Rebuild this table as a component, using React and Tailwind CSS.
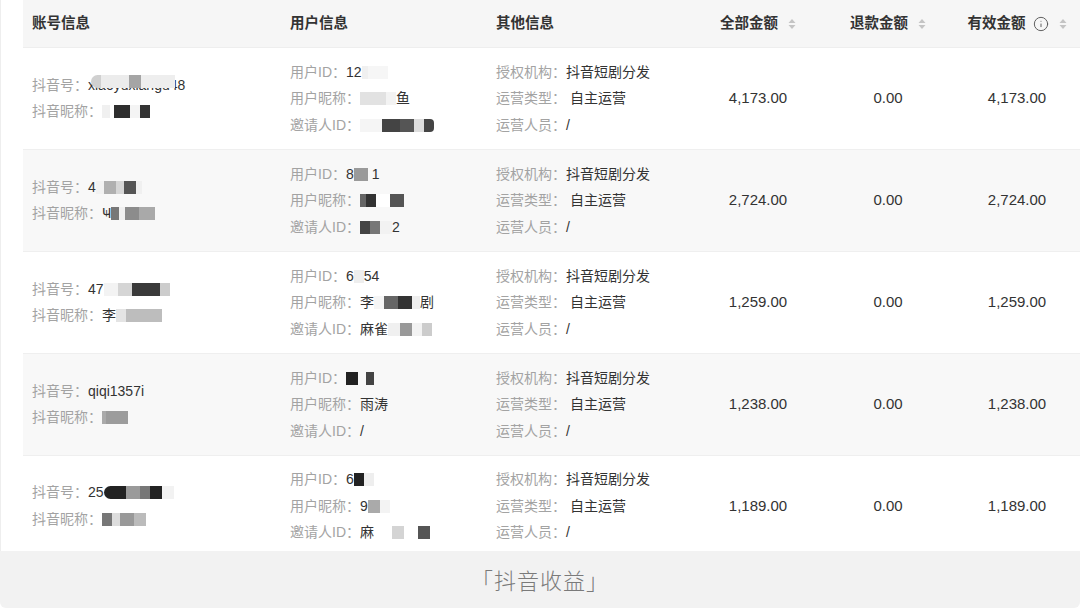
import React from 'react';
import { Info } from 'lucide-react';

const font = "font-['Liberation_Sans','Noto_Sans_CJK_SC',sans-serif]";

// mosaic blocks used to hide private values
const Mask = ({ blocks, over }) => (
    <span className={`inline-flex items-center align-middle h-[14px] blur-[0.6px] ${over ? '-ml-[94px] -mt-[8px]' : ''}`}>
        {blocks.map((cls, i) => (
            <span key={i} className={`inline-block h-[13px] ${cls}`} />
        ))}
    </span>
);

const SortIcon = () => (
    <svg width="8" height="12" viewBox="0 0 8 12" className="ml-[10px]">
        <polygon points="4,1 7.5,5 0.5,5" fill="#c4c4c4" />
        <polygon points="0.5,7 7.5,7 4,11" fill="#c4c4c4" />
    </svg>
);

const Line = ({ label, children }) => (
    <div className="flex items-center h-[26.5px] whitespace-nowrap">
        <span className="text-[#a3a3a3]">{label}</span>
        <span className="text-[#333] flex items-center">{children}</span>
    </div>
);

const rows = [
    {
        dyId: 'xiaoyuxiangu48',
        dyIdMask: ['w-[10px] bg-[#d0d0d0] rounded-l-full', 'w-[28px] bg-[#ececec]', 'w-[12px] bg-[#a5a5a5]', 'w-[34px] bg-[#eeeeee]'],
        dyIdMaskOver: true,
        dyName: null,
        dyNameMask: ['w-[8px] bg-[#f0f0f0]', 'w-[4px] bg-transparent', 'w-[16px] bg-[#2e2e2e]', 'w-[10px] bg-[#f4f4f4]', 'w-[10px] bg-[#333]'],
        uid: '12',
        uidMask: ['w-[6px] bg-[#f0f0f0]', 'w-[20px] bg-[#f6f6f6]'],
        uname: '',
        unameMask: ['w-[26px] bg-[#e2e2e2]', 'w-[10px] bg-[#f3f3f3]'],
        unameTail: '鱼',
        inviter: '',
        inviterMask: ['w-[22px] bg-[#f5f5f5]', 'w-[18px] bg-[#444]', 'w-[14px] bg-[#555]', 'w-[10px] bg-[#ddd]', 'w-[10px] bg-[#444] rounded-r-[4px]'],
        inviterTail: '',
        total: '4,173.00',
        bg: 'bg-white',
    },
    {
        dyId: '4',
        dyIdMask: ['w-[8px] bg-[#f2f2f2]', 'w-[12px] bg-[#b0b0b0]', 'w-[8px] bg-[#d6d6d6]', 'w-[12px] bg-[#555]', 'w-[6px] bg-[#f0f0f0]'],
        dyName: 'Ҹ',
        dyNameMask: ['w-[8px] bg-[#777]', 'w-[6px] bg-[#f0f0f0]', 'w-[14px] bg-[#8c8c8c]', 'w-[16px] bg-[#a9a9a9]'],
        uid: '8',
        uidMask: ['w-[14px] bg-[#9a9a9a]', 'w-[4px] bg-transparent'],
        uidTail: '1',
        uname: '',
        unameMask: ['w-[6px] bg-[#666]', 'w-[10px] bg-[#333]', 'w-[14px] bg-white', 'w-[14px] bg-[#555]'],
        unameTail: '',
        inviter: '',
        inviterMask: ['w-[10px] bg-[#444]', 'w-[10px] bg-[#777]', 'w-[12px] bg-[#f2f2f2]'],
        inviterTail: '2',
        total: '2,724.00',
        bg: 'bg-[#f8f8f8]',
    },
    {
        dyId: '47',
        dyIdMask: ['w-[14px] bg-[#f3f3f3]', 'w-[14px] bg-[#d5d5d5]', 'w-[28px] bg-[#3a3a3a]', 'w-[10px] bg-[#ccc]'],
        dyName: '李',
        dyNameMask: ['w-[10px] bg-[#e4e4e4]', 'w-[36px] bg-[#bdbdbd]'],
        uid: '6',
        uidMask: ['w-[10px] bg-[#eee]'],
        uidTail: '54',
        uname: '李',
        unameMask: ['w-[10px] bg-[#f5f5f5]', 'w-[14px] bg-[#666]', 'w-[14px] bg-[#333]', 'w-[8px] bg-[#eee]'],
        unameTail: '剧',
        inviter: '麻雀',
        inviterMask: ['w-[12px] bg-[#f0f0f0]', 'w-[12px] bg-[#999]', 'w-[10px] bg-[#f3f3f3]', 'w-[10px] bg-[#ccc]'],
        inviterTail: '',
        total: '1,259.00',
        bg: 'bg-white',
    },
    {
        dyId: 'qiqi1357i',
        dyIdMask: [],
        dyName: '',
        dyNameMask: ['w-[4px] bg-[#aaa]', 'w-[22px] bg-[#9c9c9c]'],
        uid: '',
        uidMask: ['w-[12px] bg-[#222]', 'w-[8px] bg-transparent', 'w-[8px] bg-[#444]'],
        uname: '雨涛',
        unameMask: [],
        unameTail: '',
        inviter: '/',
        inviterMask: [],
        inviterTail: '',
        total: '1,238.00',
        bg: 'bg-[#f8f8f8]',
    },
    {
        dyId: '25',
        dyIdMask: ['w-[22px] bg-[#222] rounded-l-full', 'w-[14px] bg-[#9a9a9a]', 'w-[10px] bg-[#777]', 'w-[12px] bg-[#222]', 'w-[12px] bg-[#f2f2f2]'],
        dyName: '',
        dyNameMask: ['w-[10px] bg-[#777]', 'w-[8px] bg-[#ddd]', 'w-[14px] bg-[#999]', 'w-[12px] bg-[#bbb]'],
        uid: '6',
        uidMask: ['w-[10px] bg-[#222]', 'w-[10px] bg-[#eee]'],
        uname: '9',
        unameMask: ['w-[12px] bg-[#aaa]', 'w-[10px] bg-[#f3f3f3]'],
        unameTail: '',
        inviter: '麻',
        inviterMask: ['w-[18px] bg-white', 'w-[12px] bg-[#d4d4d4]', 'w-[14px] bg-white', 'w-[12px] bg-[#555]'],
        inviterTail: '',
        total: '1,189.00',
        bg: 'bg-white',
    },
];

const Row = ({ r, last }) => (
    <div className={`grid grid-cols-[258px_206px_206px_130px_130px_128px] ${last ? 'h-[96px]' : 'h-[102px] border-b border-[#efefef]'} ${r.bg} text-[14px]`}>
        <div className={`pl-[9px] flex flex-col justify-center ${last ? 'pt-[4px]' : ''}`}>
            <Line label="抖音号：">
                {r.dyId}
                {r.dyIdMask.length > 0 && <Mask blocks={r.dyIdMask} over={r.dyIdMaskOver} />}
            </Line>
            <Line label="抖音昵称：">
                {r.dyName}
                <Mask blocks={r.dyNameMask} />
            </Line>
        </div>
        <div className={`pl-[9px] flex flex-col justify-center ${last ? 'pt-[4px]' : ''}`}>
            <Line label="用户ID：">
                {r.uid}
                <Mask blocks={r.uidMask} />
                {r.uidTail}
            </Line>
            <Line label="用户昵称：">
                {r.uname}
                {r.unameMask.length > 0 && <Mask blocks={r.unameMask} />}
                {r.unameTail}
            </Line>
            <Line label="邀请人ID：">
                {r.inviter}
                {r.inviterMask.length > 0 && <Mask blocks={r.inviterMask} />}
                {r.inviterTail}
            </Line>
        </div>
        <div className={`pl-[9px] flex flex-col justify-center ${last ? 'pt-[4px]' : ''}`}>
            <Line label="授权机构：">抖音短剧分发</Line>
            <Line label="运营类型：">&nbsp;自主运营</Line>
            <Line label="运营人员：">/</Line>
        </div>
        <div className={`flex items-center justify-center text-[#333] text-[15px] ${last ? 'pt-[4px]' : ''}`}>{r.total}</div>
        <div className={`flex items-center justify-center text-[#333] text-[15px] ${last ? 'pt-[4px]' : ''}`}>0.00</div>
        <div className={`flex items-center justify-center text-[#333] text-[15px] ${last ? 'pt-[4px]' : ''}`}>{r.total}</div>
    </div>
);

export default function App() {
    return (
        <div className={`w-[1080px] h-[608px] bg-white overflow-hidden ${font}`}>
            <div className="h-[551px] overflow-hidden pl-[22px] border-l border-[#eeeeee]">
                <div className="grid grid-cols-[258px_206px_206px_130px_130px_128px] h-[48px] bg-[#f6f6f6] border-b border-[#eeeeee] text-[14.5px] font-semibold text-[#333]">
                    <div className="pl-[9px] flex items-center">账号信息</div>
                    <div className="pl-[9px] flex items-center">用户信息</div>
                    <div className="pl-[9px] flex items-center">其他信息</div>
                    <div className="flex items-center justify-center">全部金额<SortIcon /></div>
                    <div className="flex items-center justify-center">退款金额<SortIcon /></div>
                    <div className="flex items-center justify-center">
                        有效金额
                        <Info size={16} strokeWidth={1.4} className="ml-[7px] text-[#555]" />
                        <SortIcon />
                    </div>
                </div>
                {rows.map((r, i) => (
                    <Row key={i} r={r} last={i === rows.length - 1} />
                ))}
            </div>
            <div className="h-[57px] bg-[#f2f2f2] rounded-b-[6px] flex items-center justify-center">
                <span className="text-[22px] text-[#7a7a7a] font-light tracking-[1px] font-['Noto_Sans_CJK_SC',sans-serif]">「抖音收益」</span>
            </div>
        </div>
    );
}
